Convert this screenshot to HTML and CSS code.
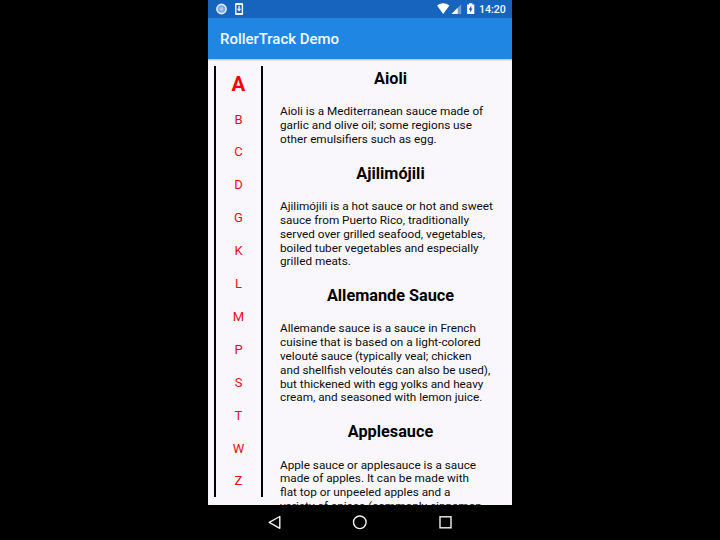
FILE: index.html
```html
<!DOCTYPE html>
<html lang="en">
<head>
<meta charset="utf-8">
<title>RollerTrack Demo</title>
<link rel="stylesheet" href="styles.css">
</head>
<body>
<div class="phone">
  <div class="status">
    <svg class="status-left" width="40" height="18" viewBox="0 0 40 18">
      <circle cx="13.5" cy="9" r="4.6" fill="#78a9df" stroke="#e4eefa" stroke-width="1.6"/>
      <circle cx="13.5" cy="9" r="2" fill="#a9c9ec"/>
      <rect x="27.8" y="3.8" width="6.6" height="10.4" rx=".8" fill="none" stroke="#f1f6fd" stroke-width="1.4"/>
      <path d="M27.5 4h7.2M27.5 14h7.2" stroke="#f1f6fd" stroke-width="1.8"/>
      <path d="M31.1 5.8v4" stroke="#f1f6fd" stroke-width="1.3"/>
      <path d="M28.9 8.8h4.4l-2.2 2.7z" fill="#f1f6fd"/>
    </svg>
    <svg class="status-right" width="42" height="18" viewBox="0 0 42 18">
      <path d="M1 5.5Q7.2 .9 13.4 5.5L7.2 14z" fill="#fff"/>
      <path d="M15.5 14L25.2 4.2V14z" fill="#6d9edb"/>
      <path d="M15.5 14L21.7 7.8V14z" fill="#f3f8fe"/>
      <path d="M33 3.3h3.4v1.1h1.9v9.7h-7.2V4.4H33z" fill="#fff"/>
      <path d="M35.3 5.6l-2.7 4.1h1.5v2.8l2.5-4.1h-1.3z" fill="#1763bd"/>
    </svg>
    <span class="clock">14:20</span>
  </div>
  <div class="appbar">RollerTrack Demo</div>
  <div class="content">
    <div class="track">
      <span class="active">A</span><span>B</span><span>C</span><span>D</span><span>G</span><span>K</span><span>L</span><span>M</span><span>P</span><span>S</span><span>T</span><span>W</span><span>Z</span>
    </div>
    <div class="list">
      <h2>Aioli</h2>
      <p>Aioli is a Mediterranean sauce made of<br>garlic and olive oil; some regions use<br>other emulsifiers such as egg.</p>
      <h2>Ajilimójili</h2>
      <p>Ajilimójili is a hot sauce or hot and sweet<br>sauce from Puerto Rico, traditionally<br>served over grilled seafood, vegetables,<br>boiled tuber vegetables and especially<br>grilled meats.</p>
      <h2>Allemande Sauce</h2>
      <p>Allemande sauce is a sauce in French<br>cuisine that is based on a light-colored<br>velouté sauce (typically veal; chicken<br>and shellfish veloutés can also be used),<br>but thickened with egg yolks and heavy<br>cream, and seasoned with lemon juice.</p>
      <h2>Applesauce</h2>
      <p>Apple sauce or applesauce is a sauce<br>made of apples. It can be made with<br>flat top or unpeeled apples and a<br>variety of spices (commonly cinnamon</p>
    </div>
  </div>
  <div class="nav">
    <svg width="304" height="35" viewBox="0 0 304 35" fill="none" stroke="#f2f2f2" stroke-width="1.4">
      <path d="M61.2 17.4L71.8 11.5V23.3z" stroke-linejoin="round"/>
      <circle cx="151.8" cy="17.3" r="6.3"/>
      <rect x="232" y="11.8" width="11" height="11"/>
    </svg>
  </div>
</div>
</body>
</html>
```
FILE: styles.css
```css
body {
  margin: 0;
  background: #000;
  font-family: Roboto, "Liberation Sans", sans-serif;
  overflow: hidden;
}
.phone {
  width: 304px;
  height: 540px;
  margin: 0 auto;
  display: flex;
  flex-direction: column;
  background: #000;
}
.status {
  height: 18px;
  flex: none;
  display: flex;
  align-items: center;
  background: #1764bf;
}
.status-right {
  margin-left: auto;
  margin-right: 1px;
}
.clock {
  width: 33px;
  color: #f4f8fe;
  font-size: 10.6px;
  font-weight: 500;
  line-height: 19px;
}
.appbar {
  height: 41px;
  flex: none;
  box-sizing: border-box;
  padding-left: 12px;
  background: #1f87e3;
  color: #f4f8fd;
  font-size: 14.95px;
  font-weight: 500;
  line-height: 43px;
  white-space: nowrap;
}
.content {
  height: 446px;
  flex: none;
  box-sizing: border-box;
  padding: 7px 0 0 6px;
  display: flex;
  overflow: hidden;
  background: #f9f7fb;
  box-shadow: inset 0 2px 2px -1px #bdb8b5;
}
.track {
  box-sizing: border-box;
  width: 49px;
  height: 431px;
  flex: none;
  display: flex;
  flex-direction: column;
  align-items: center;
  border: solid #000;
  border-width: 0 2px;
  color: #ec0c16;
  font-size: 13px;
}
.track span {
  flex: none;
  height: 32.9px;
  line-height: 32.9px;
}
.track .active {
  height: 37.6px;
  line-height: 36.5px;
  font-size: 20.5px;
  font-weight: 700;
  color: #f80000;
}
.list {
  width: 221px;
  margin-left: 17px;
  padding-top: 3.2px;
  color: #0c0c0c;
}
h2 {
  margin: 0 0 17px;
  color: #000;
  font-size: 16.25px;
  font-weight: 700;
  line-height: 19.3px;
  text-align: center;
}
p {
  margin: 0 0 17px;
  font-size: 11.75px;
  line-height: 13.8px;
  white-space: nowrap;
}
.nav {
  height: 35px;
  flex: none;
}
.nav svg {
  display: block;
}
```
